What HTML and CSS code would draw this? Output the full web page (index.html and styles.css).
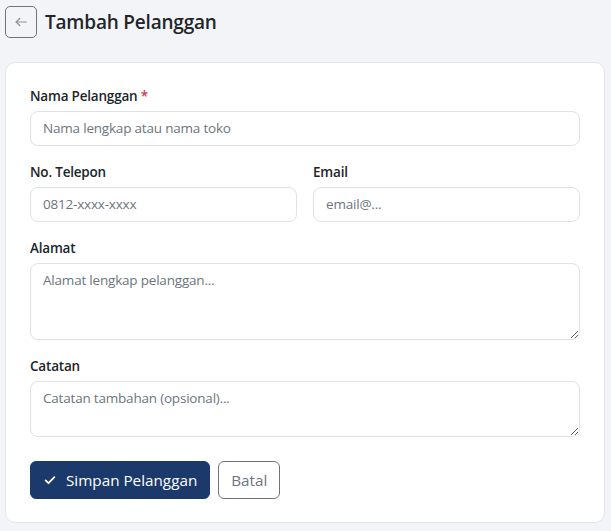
FILE: index.html
```html
<!DOCTYPE html>
<html lang="id">

<head>
    <meta charset="UTF-8">
    <meta name="viewport" content="width=device-width, initial-scale=1.0">
    <title>Tambah Pelanggan</title>
    <link rel="stylesheet" href="styles.css">
</head>

<body>
    <div class="page">
        <div class="page-header">
            <a href="#" class="btn-back" aria-label="Kembali">
                <svg width="14" height="14" viewBox="0 0 16 16" fill="none" stroke="currentColor" stroke-width="1.4" stroke-linecap="round" stroke-linejoin="round">
                    <path d="M14 8H2.5"/>
                    <path d="M6.5 4L2.5 8l4 4"/>
                </svg>
            </a>
            <h1 class="page-title">Tambah Pelanggan</h1>
        </div>

        <div class="card">
            <form class="form">
                <div class="form-group">
                    <label class="form-label">Nama Pelanggan <span class="required">*</span></label>
                    <input type="text" class="form-control" placeholder="Nama lengkap atau nama toko">
                </div>

                <div class="form-row">
                    <div class="form-group">
                        <label class="form-label">No. Telepon</label>
                        <input type="text" class="form-control" placeholder="0812-xxxx-xxxx">
                    </div>
                    <div class="form-group">
                        <label class="form-label">Email</label>
                        <input type="email" class="form-control" placeholder="email@...">
                    </div>
                </div>

                <div class="form-group">
                    <label class="form-label">Alamat</label>
                    <textarea class="form-control" rows="3" placeholder="Alamat lengkap pelanggan..."></textarea>
                </div>

                <div class="form-group">
                    <label class="form-label">Catatan</label>
                    <textarea class="form-control" rows="2" placeholder="Catatan tambahan (opsional)..."></textarea>
                </div>

                <div class="form-actions">
                    <button type="button" class="btn btn-primary">
                        <svg width="14" height="14" viewBox="0 0 16 16" fill="none" stroke="currentColor" stroke-width="2" stroke-linecap="round" stroke-linejoin="round">
                            <path d="M3 8.5l3.2 3.2L13 4.8"/>
                        </svg>
                        Simpan Pelanggan
                    </button>
                    <button type="button" class="btn btn-outline">Batal</button>
                </div>
            </form>
        </div>
    </div>
</body>

</html>
```

FILE: styles.css
```css
body {
    font-family: "Open Sans", "Noto Sans", Arial, sans-serif;
    background: #f3f4f8;
    color: #212529;
    margin: 0;
}

.page {
    padding: 6px 6px 6px 5px;
}

.page-header {
    display: flex;
    align-items: center;
    gap: 8px;
    margin-bottom: 24px;
}

.btn-back {
    display: flex;
    align-items: center;
    justify-content: center;
    width: 30px;
    height: 30px;
    border: 1px solid #6c757d;
    border-radius: 5px;
    color: #8a9099;
    text-decoration: none;
}

.page-title {
    font-size: 19px;
    font-weight: 600;
    margin: 0;
    color: #212529;
    letter-spacing: -0.2px;
}

.card {
    background: #fff;
    border: 1px solid #e3e5ea;
    border-radius: 10px;
    padding: 23px 24px 23px 24px;
}

.form-group {
    display: flex;
    flex-direction: column;
    margin-bottom: 16px;
}

.form-row {
    display: grid;
    grid-template-columns: 1fr 1fr;
    gap: 16px;
}

.form-label {
    font-size: 13.5px;
    font-weight: 600;
    line-height: 21px;
    margin-bottom: 4px;
    letter-spacing: -0.2px;
}

.required {
    color: #dc3545;
}

.form-control {
    font-family: inherit;
    font-size: 13.5px;
    line-height: 21px;
    padding: 6px 12px;
    border: 1px solid #dee2e6;
    border-radius: 8px;
    color: #212529;
    background: #fff;
    letter-spacing: -0.2px;
}

.form-control::placeholder {
    color: #6c757d;
}

textarea.form-control {
    resize: vertical;
}

.form-actions {
    display: flex;
    gap: 8px;
    margin-top: 24px;
}

.btn {
    font-family: inherit;
    font-size: 15.25px;
    line-height: 24px;
    padding: 6px 12px;
    border-radius: 6px;
    display: flex;
    align-items: center;
    gap: 9px;
}

.btn-primary {
    background: #1c396b;
    border: 1px solid #1c396b;
    color: #fff;
}

.btn-outline {
    background: #fff;
    border: 1px solid #6c757d;
    color: #6c757d;
}
```
